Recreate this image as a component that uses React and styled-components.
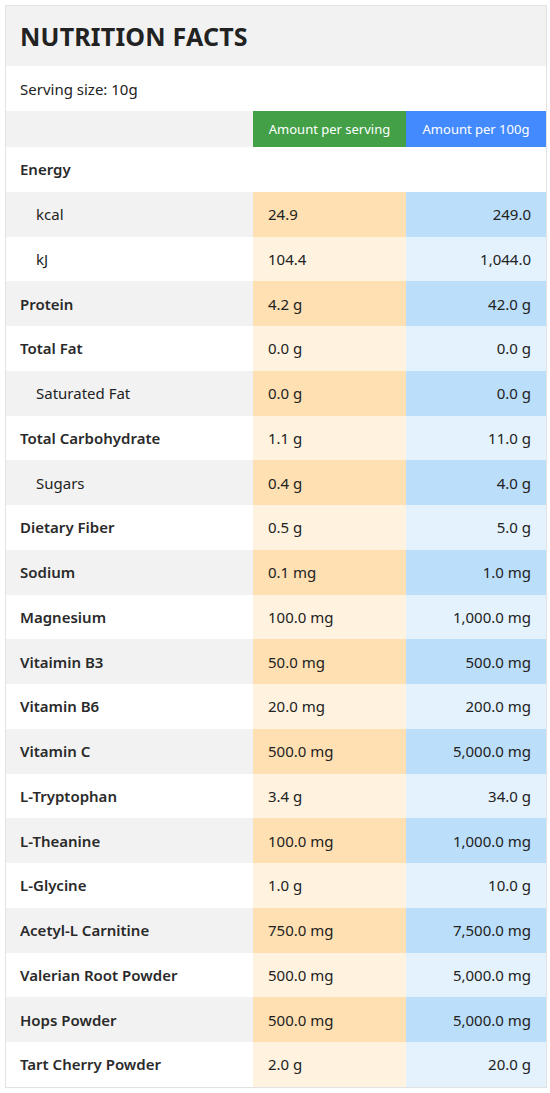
import React from 'react';
import styled, { createGlobalStyle } from 'styled-components';

const GlobalStyle = createGlobalStyle`
  body {
    margin: 0;
    background: #fff;
    font-family: "Noto Sans", "Open Sans", sans-serif;
    color: #222;
  }
`;

const Wrapper = styled.div`
  padding: 5px 3px 5px 5px;
`;

const Table = styled.div`
  width: 542px;
  border: 1px solid #e2e2e2;
  box-sizing: border-box;
`;

const Title = styled.div`
  background: #f2f2f2;
  height: 60px;
  display: flex;
  align-items: center;
  padding: 0 14px;
  font-size: 25px;
  font-weight: 700;
  color: #222;
  letter-spacing: 0.2px;
`;

const Serving = styled.div`
  height: 45px;
  display: flex;
  align-items: center;
  padding: 0 14px;
  font-size: 15px;
`;

const Row = styled.div`
  display: grid;
  grid-template-columns: 247px 153px 1fr;
  height: ${(p) => p.h || 44.76}px;
`;

const Label = styled.div`
  display: flex;
  align-items: center;
  padding-left: ${(p) => (p.indent ? 30 : 14)}px;
  background: ${(p) => (p.alt ? '#f2f2f2' : '#fff')};
  font-size: 15px;
  font-weight: ${(p) => (p.indent ? 400 : 600)};
  color: ${(p) => (p.indent ? '#222' : '#2a2a2a')};
`;

const Cell = styled.div`
  display: flex;
  align-items: center;
  justify-content: ${(p) => (p.right ? 'flex-end' : 'flex-start')};
  padding: 0 15px;
  font-size: 15px;
  background: ${(p) => p.bg};
`;

const HeadCell = styled(Cell)`
  color: #fff;
  font-size: 13px;
  justify-content: center;
  padding: 0;
`;

const rows = [
  ['kcal', '24.9', '249.0', true],
  ['kJ', '104.4', '1,044.0', true],
  ['Protein', '4.2 g', '42.0 g'],
  ['Total Fat', '0.0 g', '0.0 g'],
  ['Saturated Fat', '0.0 g', '0.0 g', true],
  ['Total Carbohydrate', '1.1 g', '11.0 g'],
  ['Sugars', '0.4 g', '4.0 g', true],
  ['Dietary Fiber', '0.5 g', '5.0 g'],
  ['Sodium', '0.1 mg', '1.0 mg'],
  ['Magnesium', '100.0 mg', '1,000.0 mg'],
  ['Vitaimin B3', '50.0 mg', '500.0 mg'],
  ['Vitamin B6', '20.0 mg', '200.0 mg'],
  ['Vitamin C', '500.0 mg', '5,000.0 mg'],
  ['L-Tryptophan', '3.4 g', '34.0 g'],
  ['L-Theanine', '100.0 mg', '1,000.0 mg'],
  ['L-Glycine', '1.0 g', '10.0 g'],
  ['Acetyl-L Carnitine', '750.0 mg', '7,500.0 mg'],
  ['Valerian Root Powder', '500.0 mg', '5,000.0 mg'],
  ['Hops Powder', '500.0 mg', '5,000.0 mg'],
  ['Tart Cherry Powder', '2.0 g', '20.0 g'],
];

export default function App() {
  return (
    <Wrapper>
      <GlobalStyle />
      <Table>
        <Title>NUTRITION FACTS</Title>
        <Serving>Serving size: 10g</Serving>
        <Row h={36}>
          <Label alt />
          <HeadCell bg="#43a047">Amount per serving</HeadCell>
          <HeadCell bg="#448aff">Amount per 100g</HeadCell>
        </Row>
        <Row>
          <Label>Energy</Label>
          <Cell bg="#fff" />
          <Cell bg="#fff" />
        </Row>
        {rows.map(([name, serv, per100, indent], i) => {
          const alt = i % 2 === 0;
          return (
            <Row key={name}>
              <Label alt={alt} indent={indent}>{name}</Label>
              <Cell bg={alt ? '#ffe0b2' : '#fff3e0'}>{serv}</Cell>
              <Cell right bg={alt ? '#bbdefb' : '#e3f2fd'}>{per100}</Cell>
            </Row>
          );
        })}
      </Table>
    </Wrapper>
  );
}
